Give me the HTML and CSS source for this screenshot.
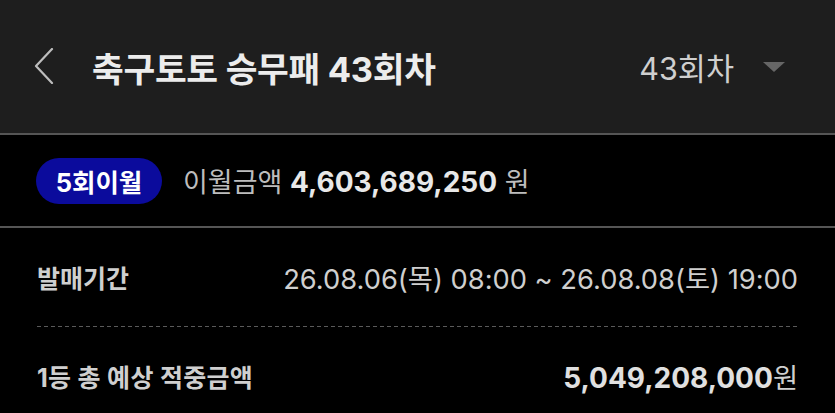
FILE: index.html
```html
<!DOCTYPE html>
<html lang="ko">
<head>
<meta charset="utf-8">
<title>축구토토 승무패 43회차</title>
<link rel="stylesheet" href="styles.css">
</head>
<body>
<header class="topbar">
  <div class="left">
    <svg class="back" width="22" height="36" viewBox="0 0 22 36"><path d="M19 1 L3 18 L19 35" fill="none" stroke="#bdbdbd" stroke-width="2.2" stroke-linecap="round" stroke-linejoin="round"/></svg>
    <h1 class="title">축구토토 승무패 43회차</h1>
  </div>
  <div class="right">
    <span class="round">43회차</span>
    <svg class="caret" width="22" height="10" viewBox="0 0 22 10"><path d="M0 0 L22 0 L11 10 Z" fill="#666"/></svg>
  </div>
</header>
<section class="carry">
  <span class="badge">5회이월</span>
  <span class="carry-text">이월금액 <b class="amount">4,603,689,250</b> 원</span>
</section>
<section class="info">
  <div class="row">
    <span class="label">발매기간</span>
    <span class="value">26.08.06(목) 08:00 ~ 26.08.08(토) 19:00</span>
  </div>
  <div class="dash"></div>
  <div class="row">
    <span class="label wide">1등 총 예상 적중금액</span>
    <span class="value"><b class="big">5,049,208,000</b>원</span>
  </div>
</section>
</body>
</html>
```
FILE: styles.css
```css
* { box-sizing: border-box; }
html, body { margin: 0; padding: 0; background: #000; }
body {
  width: 835px;
  height: 413px;
  overflow: hidden;
  font-family: Inter, "Noto Sans CJK KR", sans-serif;
  color: #e6e6e6;
}
.topbar {
  height: 135px;
  background: #1e1e1e;
  border-bottom: 2px solid #555;
  display: flex;
  align-items: center;
  justify-content: space-between;
  padding: 0 50px 0 33px;
}
.left { display: flex; align-items: center; }
.back { display: block; margin-right: 37px; margin-top: -2px; }
.title {
  margin: 0;
  font-size: 34.5px;
  font-weight: 700;
  color: #ececec;
  letter-spacing: -0.3px;
}
.right { display: flex; align-items: center; }
.round { font-size: 30.5px; color: #cfcfcf; font-weight: 400; margin-right: 29px; }
.caret { display: block; }
.carry {
  height: 93px;
  border-bottom: 2px solid #555;
  display: flex;
  align-items: center;
  padding: 0 36px;
}
.badge {
  height: 46px;
  width: 126px;
  border-radius: 23px;
  background: #0b0b9c;
  color: #fff;
  font-weight: 700;
  font-size: 25.5px;
  display: flex;
  align-items: center;
  justify-content: center;
  margin-right: 21px;
}
.carry-text { font-size: 27px; color: #bdbdbd; }
.amount { color: #e8e8e8; font-weight: 700; font-size: 28px; }
.info { padding: 0 37px; }
.row {
  display: flex;
  justify-content: space-between;
  align-items: center;
  height: 98px;
}
.label { font-size: 25px; font-weight: 700; color: #cfcfcf; }
.label.wide { letter-spacing: 0.3px; }
.value { font-size: 27.3px; color: #cfcfcf; }
.big { font-size: 28px; font-weight: 700; color: #e0e0e0; }
.dash {
  height: 1px;
  background: repeating-linear-gradient(to right, #5a5a5a 0 4px, transparent 4px 7px);
}
```
